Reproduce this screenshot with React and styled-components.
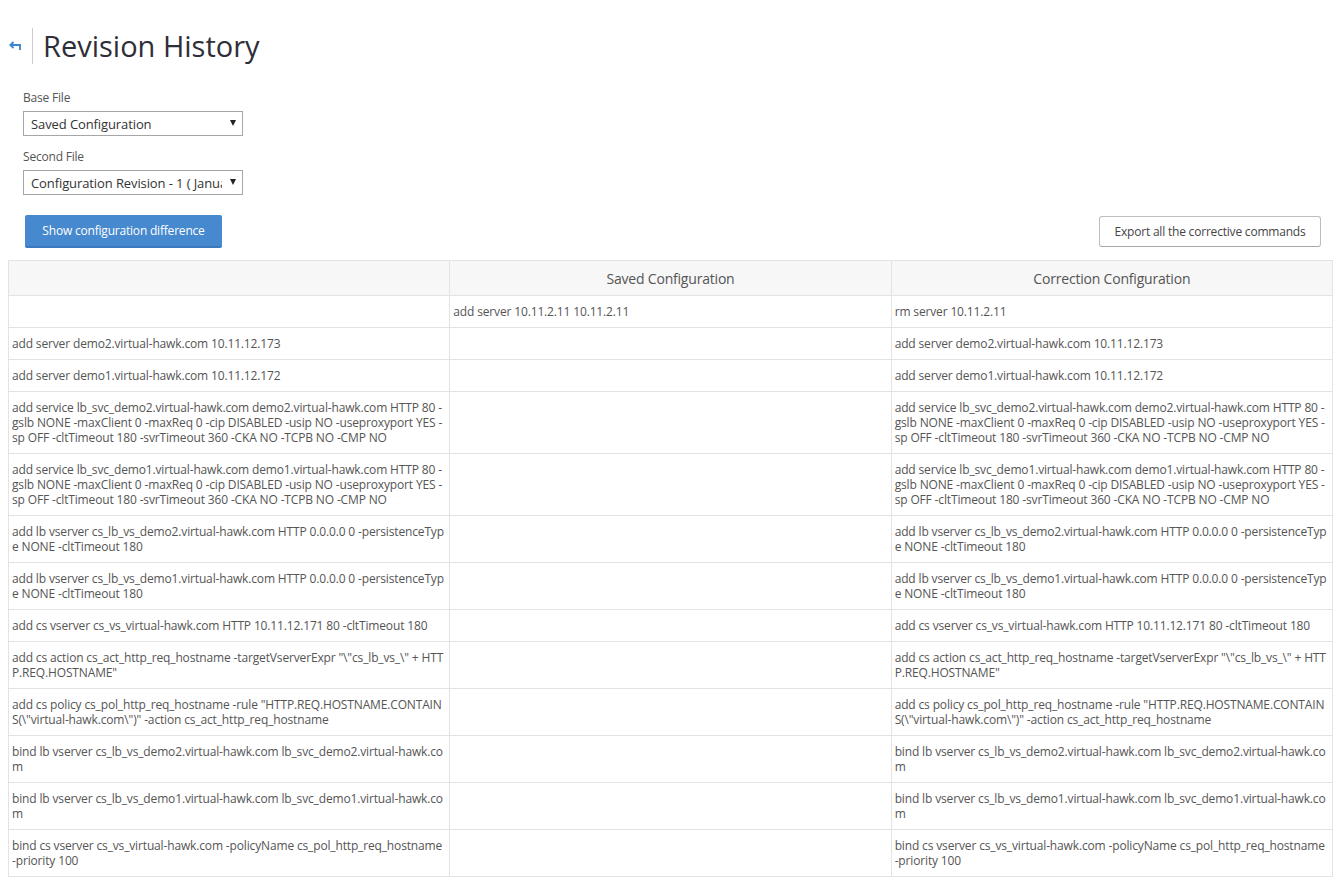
import React from "react";
import styled, { createGlobalStyle } from "styled-components";

const GlobalStyle = createGlobalStyle`
  html, body {
    overflow: hidden;
  }
  body {
    margin: 8px;
    background: #ffffff;
    font-family: "Open Sans", "Noto Sans", sans-serif;
    color: #555555;
  }
`;

const Page = styled.div`
  display: flex;
  flex-direction: column;
`;

const TitleBar = styled.div`
  display: flex;
  align-items: center;
  height: 36px;
  margin-top: 20px;
`;

const BackButton = styled.button`
  display: flex;
  align-items: center;
  justify-content: flex-start;
  width: 26px;
  height: 36px;
  padding: 0 0 0 2px;
  border: none;
  border-right: 1px solid #cccccc;
  background: transparent;
  cursor: pointer;
  margin-right: 10px;
  margin-left: -1px;
`;

const Title = styled.h1`
  margin: 0;
  font-size: 29px;
  font-weight: 400;
  color: #2e2e38;
  line-height: 36px;
`;

const Form = styled.div`
  display: flex;
  flex-direction: column;
  padding-left: 15px;
  margin-top: 26px;
`;

const Label = styled.label`
  font-size: 12px;
  line-height: 16px;
  letter-spacing: -0.2px;
  color: #555555;
  margin-bottom: 5px;
`;

const SelectBox = styled.div`
  position: relative;
  width: 220px;
  height: 25px;
  box-sizing: border-box;
  border: 1px solid #a6a6a6;
  background: #ffffff;
  display: flex;
  align-items: center;
  padding: 0 20px 0 7px;
  margin-bottom: ${(p) => (p.$last ? "0" : "13px")};
`;

const SelectValue = styled.span`
  flex: 1;
  font-size: 13px;
  letter-spacing: -0.1px;
  color: #333333;
  white-space: nowrap;
  overflow: hidden;
`;

const Caret = styled.span`
  position: absolute;
  right: 6px;
  top: 8px;
  width: 0;
  height: 0;
  border-left: 3px solid transparent;
  border-right: 3px solid transparent;
  border-top: 6px solid #222222;
`;

const Toolbar = styled.div`
  display: flex;
  align-items: center;
  justify-content: space-between;
  padding: 0 12px 0 17px;
  margin-top: 20px;
  margin-bottom: 12px;
`;

const PrimaryButton = styled.button`
  height: 33px;
  width: 197px;
  border: none;
  border-bottom: 2px solid #3a79bd;
  border-radius: 2px;
  background: #4689cf;
  color: #ffffff;
  font-family: inherit;
  font-size: 12px;
  letter-spacing: -0.2px;
  cursor: pointer;
`;

const SecondaryButton = styled.button`
  height: 31px;
  width: 222px;
  border: 1px solid #bdbdbd;
  border-bottom-color: #a9a9a9;
  border-radius: 3px;
  background: #ffffff;
  color: #444444;
  font-family: inherit;
  font-size: 12px;
  letter-spacing: -0.2px;
  cursor: pointer;
`;

const Table = styled.table`
  width: 100%;
  table-layout: fixed;
  border-collapse: collapse;
  border: 1px solid #e3e3e3;
`;

const HeadCell = styled.th`
  height: 34px;
  padding: 0 4px;
  background: #f7f7f7;
  border: 1px solid #e3e3e3;
  font-weight: 400;
  font-size: 14px;
  letter-spacing: -0.2px;
  color: #555555;
  text-align: center;
`;

const Cell = styled.td`
  padding: 8px 4px 8px 3px;
  border: 1px solid #e3e3e3;
  font-size: 12px;
  line-height: 15px;
  letter-spacing: -0.15px;
  color: #555555;
  vertical-align: top;
  word-break: break-all;
`;

function BackArrow() {
  return (
    <svg width="13" height="10" viewBox="0 0 13 10" fill="none">
      <path
        d="M4.5 1 L1.3 4 L4.5 7 M1.5 4 H11 V9"
        stroke="#3d86d4"
        strokeWidth="1.9"
        strokeLinejoin="miter"
      />
    </svg>
  );
}

const rows = [
  ["", "add server 10.11.2.11 10.11.2.11", "rm server 10.11.2.11"],
  ["add server demo2.virtual-hawk.com 10.11.12.173", "", "add server demo2.virtual-hawk.com 10.11.12.173"],
  ["add server demo1.virtual-hawk.com 10.11.12.172", "", "add server demo1.virtual-hawk.com 10.11.12.172"],
  [
    "add service lb_svc_demo2.virtual-hawk.com demo2.virtual-hawk.com HTTP 80 -gslb NONE -maxClient 0 -maxReq 0 -cip DISABLED -usip NO -useproxyport YES -sp OFF -cltTimeout 180 -svrTimeout 360 -CKA NO -TCPB NO -CMP NO",
    "",
    "add service lb_svc_demo2.virtual-hawk.com demo2.virtual-hawk.com HTTP 80 -gslb NONE -maxClient 0 -maxReq 0 -cip DISABLED -usip NO -useproxyport YES -sp OFF -cltTimeout 180 -svrTimeout 360 -CKA NO -TCPB NO -CMP NO",
  ],
  [
    "add service lb_svc_demo1.virtual-hawk.com demo1.virtual-hawk.com HTTP 80 -gslb NONE -maxClient 0 -maxReq 0 -cip DISABLED -usip NO -useproxyport YES -sp OFF -cltTimeout 180 -svrTimeout 360 -CKA NO -TCPB NO -CMP NO",
    "",
    "add service lb_svc_demo1.virtual-hawk.com demo1.virtual-hawk.com HTTP 80 -gslb NONE -maxClient 0 -maxReq 0 -cip DISABLED -usip NO -useproxyport YES -sp OFF -cltTimeout 180 -svrTimeout 360 -CKA NO -TCPB NO -CMP NO",
  ],
  [
    "add lb vserver cs_lb_vs_demo2.virtual-hawk.com HTTP 0.0.0.0 0 -persistenceType NONE -cltTimeout 180",
    "",
    "add lb vserver cs_lb_vs_demo2.virtual-hawk.com HTTP 0.0.0.0 0 -persistenceType NONE -cltTimeout 180",
  ],
  [
    "add lb vserver cs_lb_vs_demo1.virtual-hawk.com HTTP 0.0.0.0 0 -persistenceType NONE -cltTimeout 180",
    "",
    "add lb vserver cs_lb_vs_demo1.virtual-hawk.com HTTP 0.0.0.0 0 -persistenceType NONE -cltTimeout 180",
  ],
  [
    "add cs vserver cs_vs_virtual-hawk.com HTTP 10.11.12.171 80 -cltTimeout 180",
    "",
    "add cs vserver cs_vs_virtual-hawk.com HTTP 10.11.12.171 80 -cltTimeout 180",
  ],
  [
    'add cs action cs_act_http_req_hostname -targetVserverExpr "\\"cs_lb_vs_\\" + HTTP.REQ.HOSTNAME"',
    "",
    'add cs action cs_act_http_req_hostname -targetVserverExpr "\\"cs_lb_vs_\\" + HTTP.REQ.HOSTNAME"',
  ],
  [
    'add cs policy cs_pol_http_req_hostname -rule "HTTP.REQ.HOSTNAME.CONTAINS(\\"virtual-hawk.com\\")" -action cs_act_http_req_hostname',
    "",
    'add cs policy cs_pol_http_req_hostname -rule "HTTP.REQ.HOSTNAME.CONTAINS(\\"virtual-hawk.com\\")" -action cs_act_http_req_hostname',
  ],
  [
    "bind lb vserver cs_lb_vs_demo2.virtual-hawk.com lb_svc_demo2.virtual-hawk.com",
    "",
    "bind lb vserver cs_lb_vs_demo2.virtual-hawk.com lb_svc_demo2.virtual-hawk.com",
  ],
  [
    "bind lb vserver cs_lb_vs_demo1.virtual-hawk.com lb_svc_demo1.virtual-hawk.com",
    "",
    "bind lb vserver cs_lb_vs_demo1.virtual-hawk.com lb_svc_demo1.virtual-hawk.com",
  ],
  [
    "bind cs vserver cs_vs_virtual-hawk.com -policyName cs_pol_http_req_hostname -priority 100",
    "",
    "bind cs vserver cs_vs_virtual-hawk.com -policyName cs_pol_http_req_hostname -priority 100",
  ],
];

export default function App() {
  return (
    <Page>
      <GlobalStyle />
      <TitleBar>
        <BackButton aria-label="Back">
          <BackArrow />
        </BackButton>
        <Title>Revision History</Title>
      </TitleBar>

      <Form>
        <Label>Base File</Label>
        <SelectBox>
          <SelectValue>Saved Configuration</SelectValue>
          <Caret />
        </SelectBox>
        <Label>Second File</Label>
        <SelectBox $last>
          <SelectValue>Configuration Revision - 1 ( January 2018 )</SelectValue>
          <Caret />
        </SelectBox>
      </Form>

      <Toolbar>
        <PrimaryButton>Show configuration difference</PrimaryButton>
        <SecondaryButton>Export all the corrective commands</SecondaryButton>
      </Toolbar>

      <Table>
        <thead>
          <tr>
            <HeadCell />
            <HeadCell>Saved Configuration</HeadCell>
            <HeadCell>Correction Configuration</HeadCell>
          </tr>
        </thead>
        <tbody>
          {rows.map((r, i) => (
            <tr key={i}>
              <Cell>{r[0]}</Cell>
              <Cell>{r[1]}</Cell>
              <Cell>{r[2]}</Cell>
            </tr>
          ))}
        </tbody>
      </Table>
    </Page>
  );
}
